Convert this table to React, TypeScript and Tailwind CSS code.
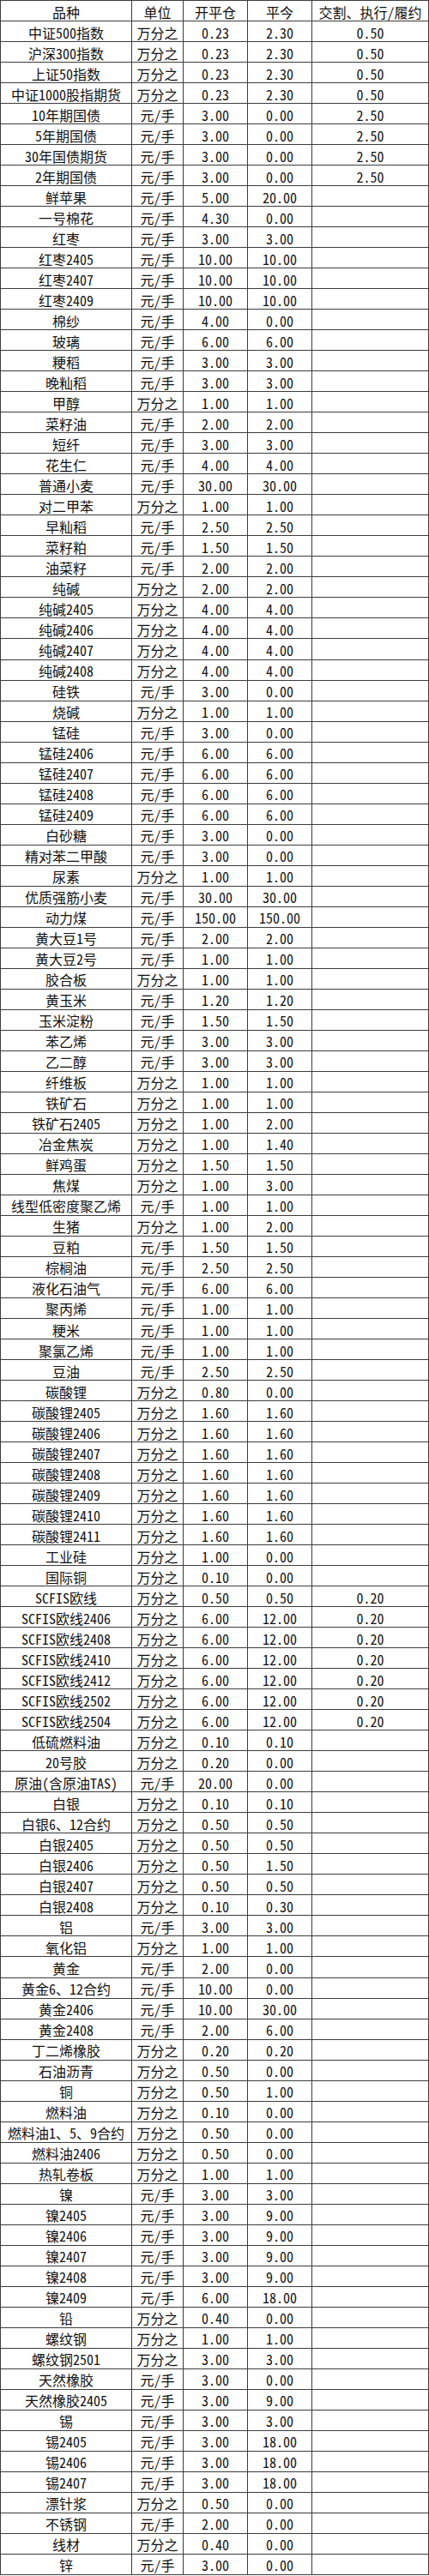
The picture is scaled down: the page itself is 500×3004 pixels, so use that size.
import React from "react";

type Row = [string, string, string, string, string?];

const W = "万分之";
const Y = "元/手";

const rows: Row[] = [
  ["中证500指数", W, "0.23", "2.30", "0.50"],
  ["沪深300指数", W, "0.23", "2.30", "0.50"],
  ["上证50指数", W, "0.23", "2.30", "0.50"],
  ["中证1000股指期货", W, "0.23", "2.30", "0.50"],
  ["10年期国债", Y, "3.00", "0.00", "2.50"],
  ["5年期国债", Y, "3.00", "0.00", "2.50"],
  ["30年国债期货", Y, "3.00", "0.00", "2.50"],
  ["2年期国债", Y, "3.00", "0.00", "2.50"],
  ["鲜苹果", Y, "5.00", "20.00"],
  ["一号棉花", Y, "4.30", "0.00"],
  ["红枣", Y, "3.00", "3.00"],
  ["红枣2405", Y, "10.00", "10.00"],
  ["红枣2407", Y, "10.00", "10.00"],
  ["红枣2409", Y, "10.00", "10.00"],
  ["棉纱", Y, "4.00", "0.00"],
  ["玻璃", Y, "6.00", "6.00"],
  ["粳稻", Y, "3.00", "3.00"],
  ["晚籼稻", Y, "3.00", "3.00"],
  ["甲醇", W, "1.00", "1.00"],
  ["菜籽油", Y, "2.00", "2.00"],
  ["短纤", Y, "3.00", "3.00"],
  ["花生仁", Y, "4.00", "4.00"],
  ["普通小麦", Y, "30.00", "30.00"],
  ["对二甲苯", W, "1.00", "1.00"],
  ["早籼稻", Y, "2.50", "2.50"],
  ["菜籽粕", Y, "1.50", "1.50"],
  ["油菜籽", Y, "2.00", "2.00"],
  ["纯碱", W, "2.00", "2.00"],
  ["纯碱2405", W, "4.00", "4.00"],
  ["纯碱2406", W, "4.00", "4.00"],
  ["纯碱2407", W, "4.00", "4.00"],
  ["纯碱2408", W, "4.00", "4.00"],
  ["硅铁", Y, "3.00", "0.00"],
  ["烧碱", W, "1.00", "1.00"],
  ["锰硅", Y, "3.00", "0.00"],
  ["锰硅2406", Y, "6.00", "6.00"],
  ["锰硅2407", Y, "6.00", "6.00"],
  ["锰硅2408", Y, "6.00", "6.00"],
  ["锰硅2409", Y, "6.00", "6.00"],
  ["白砂糖", Y, "3.00", "0.00"],
  ["精对苯二甲酸", Y, "3.00", "0.00"],
  ["尿素", W, "1.00", "1.00"],
  ["优质强筋小麦", Y, "30.00", "30.00"],
  ["动力煤", Y, "150.00", "150.00"],
  ["黄大豆1号", Y, "2.00", "2.00"],
  ["黄大豆2号", Y, "1.00", "1.00"],
  ["胶合板", W, "1.00", "1.00"],
  ["黄玉米", Y, "1.20", "1.20"],
  ["玉米淀粉", Y, "1.50", "1.50"],
  ["苯乙烯", Y, "3.00", "3.00"],
  ["乙二醇", Y, "3.00", "3.00"],
  ["纤维板", W, "1.00", "1.00"],
  ["铁矿石", W, "1.00", "1.00"],
  ["铁矿石2405", W, "1.00", "2.00"],
  ["冶金焦炭", W, "1.00", "1.40"],
  ["鲜鸡蛋", W, "1.50", "1.50"],
  ["焦煤", W, "1.00", "3.00"],
  ["线型低密度聚乙烯", Y, "1.00", "1.00"],
  ["生猪", W, "1.00", "2.00"],
  ["豆粕", Y, "1.50", "1.50"],
  ["棕榈油", Y, "2.50", "2.50"],
  ["液化石油气", Y, "6.00", "6.00"],
  ["聚丙烯", Y, "1.00", "1.00"],
  ["粳米", Y, "1.00", "1.00"],
  ["聚氯乙烯", Y, "1.00", "1.00"],
  ["豆油", Y, "2.50", "2.50"],
  ["碳酸锂", W, "0.80", "0.00"],
  ["碳酸锂2405", W, "1.60", "1.60"],
  ["碳酸锂2406", W, "1.60", "1.60"],
  ["碳酸锂2407", W, "1.60", "1.60"],
  ["碳酸锂2408", W, "1.60", "1.60"],
  ["碳酸锂2409", W, "1.60", "1.60"],
  ["碳酸锂2410", W, "1.60", "1.60"],
  ["碳酸锂2411", W, "1.60", "1.60"],
  ["工业硅", W, "1.00", "0.00"],
  ["国际铜", W, "0.10", "0.00"],
  ["SCFIS欧线", W, "0.50", "0.50", "0.20"],
  ["SCFIS欧线2406", W, "6.00", "12.00", "0.20"],
  ["SCFIS欧线2408", W, "6.00", "12.00", "0.20"],
  ["SCFIS欧线2410", W, "6.00", "12.00", "0.20"],
  ["SCFIS欧线2412", W, "6.00", "12.00", "0.20"],
  ["SCFIS欧线2502", W, "6.00", "12.00", "0.20"],
  ["SCFIS欧线2504", W, "6.00", "12.00", "0.20"],
  ["低硫燃料油", W, "0.10", "0.10"],
  ["20号胶", W, "0.20", "0.00"],
  ["原油(含原油TAS)", Y, "20.00", "0.00"],
  ["白银", W, "0.10", "0.10"],
  ["白银6、12合约", W, "0.50", "0.50"],
  ["白银2405", W, "0.50", "0.50"],
  ["白银2406", W, "0.50", "1.50"],
  ["白银2407", W, "0.50", "0.50"],
  ["白银2408", W, "0.10", "0.30"],
  ["铝", Y, "3.00", "3.00"],
  ["氧化铝", W, "1.00", "1.00"],
  ["黄金", Y, "2.00", "0.00"],
  ["黄金6、12合约", Y, "10.00", "0.00"],
  ["黄金2406", Y, "10.00", "30.00"],
  ["黄金2408", Y, "2.00", "6.00"],
  ["丁二烯橡胶", W, "0.20", "0.20"],
  ["石油沥青", W, "0.50", "0.00"],
  ["铜", W, "0.50", "1.00"],
  ["燃料油", W, "0.10", "0.00"],
  ["燃料油1、5、9合约", W, "0.50", "0.00"],
  ["燃料油2406", W, "0.50", "0.00"],
  ["热轧卷板", W, "1.00", "1.00"],
  ["镍", Y, "3.00", "3.00"],
  ["镍2405", Y, "3.00", "9.00"],
  ["镍2406", Y, "3.00", "9.00"],
  ["镍2407", Y, "3.00", "9.00"],
  ["镍2408", Y, "3.00", "9.00"],
  ["镍2409", Y, "6.00", "18.00"],
  ["铅", W, "0.40", "0.00"],
  ["螺纹钢", W, "1.00", "1.00"],
  ["螺纹钢2501", W, "3.00", "3.00"],
  ["天然橡胶", Y, "3.00", "0.00"],
  ["天然橡胶2405", Y, "3.00", "9.00"],
  ["锡", Y, "3.00", "3.00"],
  ["锡2405", Y, "3.00", "18.00"],
  ["锡2406", Y, "3.00", "18.00"],
  ["锡2407", Y, "3.00", "18.00"],
  ["漂针浆", W, "0.50", "0.00"],
  ["不锈钢", Y, "2.00", "0.00"],
  ["线材", W, "0.40", "0.00"],
  ["锌", Y, "3.00", "0.00"],
];

const header: Row = ["品种", "单位", "开平仓", "平今", "交割、执行/履约"];

function Cell({ children }: { children?: React.ReactNode }) {
  return (
    <div className="flex items-center justify-center whitespace-nowrap border-r border-b border-[#3c3c3c] pt-[2px] leading-none">
      {children}
    </div>
  );
}

export default function App() {
  const all: Row[] = [header, ...rows];
  return (
    <div
      className="w-[500px] bg-white text-[16px] text-[#111111]"
      style={{ fontFamily: '"Noto Sans Mono CJK SC", "Noto Sans CJK SC", sans-serif' }}
    >
      <div className="grid grid-cols-[153px_60px_75px_75px_136px] auto-rows-[24.016px] border-l border-t border-[#3c3c3c]">
        {all.map((r, i) => (
          <React.Fragment key={i}>
            <Cell>{r[0]}</Cell>
            <Cell>{r[1]}</Cell>
            <Cell>{r[2]}</Cell>
            <Cell>{r[3]}</Cell>
            <Cell>{r[4] ?? ""}</Cell>
          </React.Fragment>
        ))}
      </div>
    </div>
  );
}
